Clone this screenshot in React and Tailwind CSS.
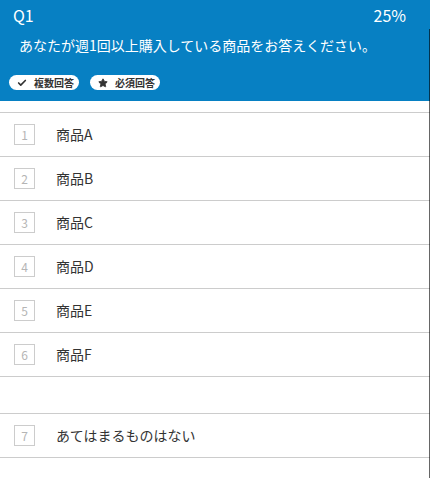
import { Check, Star } from "lucide-react";

const items = ["商品A", "商品B", "商品C", "商品D", "商品E", "商品F"];

function Row({ num, label }) {
  return (
    <div className="flex h-[44px] items-center border-b border-[#cccccc]">
      <div className="ml-[14px] flex h-[21px] w-[21px] items-center justify-center border border-[#cccccc] text-[12px] text-[#b5b5b5]">
        {num}
      </div>
      <span className="ml-[21px] text-[14px] text-[#333333]">{label}</span>
    </div>
  );
}

function Badge({ icon, children }) {
  return (
    <span className="flex h-[15px] items-center gap-[7px] rounded-full bg-white pl-[8px] pr-[5px] text-[10px] font-bold text-[#333333]">
      {icon}
      {children}
    </span>
  );
}

export default function App() {
  return (
    <div
      className="relative h-[478px] w-[430px] overflow-hidden bg-white"
      style={{ fontFamily: '"Noto Sans CJK JP", "Noto Sans", sans-serif' }}
    >
      <header className="h-[101px] bg-[#0780c3] text-white">
        <div className="flex h-[30px] items-center justify-between pl-[13px] pr-[24px] text-[16px]">
          <span>Q1</span>
          <span>25%</span>
        </div>
        <p className="ml-[19px] mt-[6px] text-[14px] leading-[18px]">
          あなたが週1回以上購入している商品をお答えください。
        </p>
        <div className="ml-[9px] mt-[21px] flex gap-[11px]">
          <Badge icon={<Check className="h-[10px] w-[10px]" strokeWidth={4} />}>複数回答</Badge>
          <Badge icon={<Star className="h-[10px] w-[10px] fill-[#333333]" strokeWidth={2} />}>必須回答</Badge>
        </div>
      </header>
      <div className="mt-[11px] border-t border-[#cccccc]">
        {items.map((label, i) => (
          <Row key={label} num={i + 1} label={label} />
        ))}
        <div className="h-[37px] border-b border-[#cccccc]" />
        <Row num={7} label="あてはまるものはない" />
      </div>
      <div className="absolute right-0 top-[29px] bottom-0 w-px bg-black/60" />
    </div>
  );
}
